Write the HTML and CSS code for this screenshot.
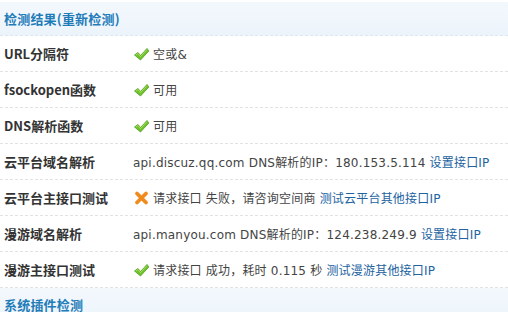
FILE: index.html
```html
<!DOCTYPE html>
<html lang="zh">
<head>
<meta charset="utf-8">
<link rel="stylesheet" href="styles.css">
</head>
<body>
<div class="panel">
  <div class="head">检测结果(重新检测)</div>
  <div class="row"><div class="label">URL分隔符</div><div class="val"><span class="ic ok"></span>空或&amp;</div></div>
  <div class="row"><div class="label">fsockopen函数</div><div class="val"><span class="ic ok"></span>可用</div></div>
  <div class="row"><div class="label">DNS解析函数</div><div class="val"><span class="ic ok"></span>可用</div></div>
  <div class="row"><div class="label">云平台域名解析</div><div class="val">api.discuz.qq.com DNS解析的IP：180.153.5.114 <a class="lnk">设置接口IP</a></div></div>
  <div class="row"><div class="label">云平台主接口测试</div><div class="val"><span class="ic err"></span>请求接口 失败，请咨询空间商 <a class="lnk">测试云平台其他接口IP</a></div></div>
  <div class="row"><div class="label">漫游域名解析</div><div class="val">api.manyou.com DNS解析的IP：124.238.249.9 <a class="lnk">设置接口IP</a></div></div>
  <div class="row"><div class="label">漫游主接口测试</div><div class="val"><span class="ic ok"></span>请求接口 成功，耗时 0.115 秒 <a class="lnk">测试漫游其他接口IP</a></div></div>
  <div class="head head2">系统插件检测</div>
</div>
</body>
</html>
```
FILE: styles.css
```css
html, body { margin: 0; padding: 0; background: #fff; }
body {
  font-family: "DejaVu Sans", "Noto Sans CJK SC", sans-serif;
  font-size: 12px;
  color: #444;
}
.panel { padding-top: 2px; width: 508px; }
.head {
  height: 33px;
  line-height: 33px;
  padding-left: 4px;
  background: linear-gradient(#f3f8fd, #ecf4fb);
  border-bottom: 1px dashed #dfe6ee;
  color: #1f7cb8;
  font-weight: bold;
  font-size: 13px;
  letter-spacing: 0.2px;
  font-family: "Noto Sans CJK SC", sans-serif;
}
.head2 { border-bottom: none; }
.row {
  display: flex;
  align-items: center;
  height: 35px;
  border-bottom: 1px dashed #e2e2e2;
}
.label {
  width: 129px;
  padding-left: 4px;
  flex: none;
  font-family: "Noto Sans CJK SC", sans-serif;
  font-weight: bold;
  font-size: 13px;
  color: #333;
}
.val {
  display: flex;
  align-items: center;
  white-space: pre;
  font-family: "DejaVu Sans", "Noto Sans CJK SC", sans-serif;
  font-size: 12px;
  letter-spacing: 0.2px;
  color: #444;
}
.lnk { color: #22639f; text-decoration: none; }
.ic {
  width: 17px;
  height: 16px;
  margin-right: 3px;
  flex: none;
  background-repeat: no-repeat;
  background-position: center;
}
.ok {
  background-image: url("data:image/svg+xml,%3Csvg xmlns='http://www.w3.org/2000/svg' width='17' height='16' viewBox='0 0 17 16'%3E%3Cpath d='M1.5 9 L5 6.5 L7.5 9.5 L14 2.5 L15.8 5 L7.5 14 Z' fill='%2370c22c' stroke='%23509e1c' stroke-width='0.8' stroke-linejoin='round'/%3E%3Cpath d='M3 9 L5 7.6 L7.5 10.6 L13.8 3.8' fill='none' stroke='%23a8e060' stroke-width='0.9'/%3E%3C/svg%3E");
}
.err {
  background-image: url("data:image/svg+xml,%3Csvg xmlns='http://www.w3.org/2000/svg' width='17' height='16' viewBox='0 0 17 16'%3E%3Cpath d='M4 3.5 L13 12.5 M13 3.5 L4 12.5' stroke='%23f08a1c' stroke-width='3.8' stroke-linecap='round'/%3E%3C/svg%3E");
}
```
